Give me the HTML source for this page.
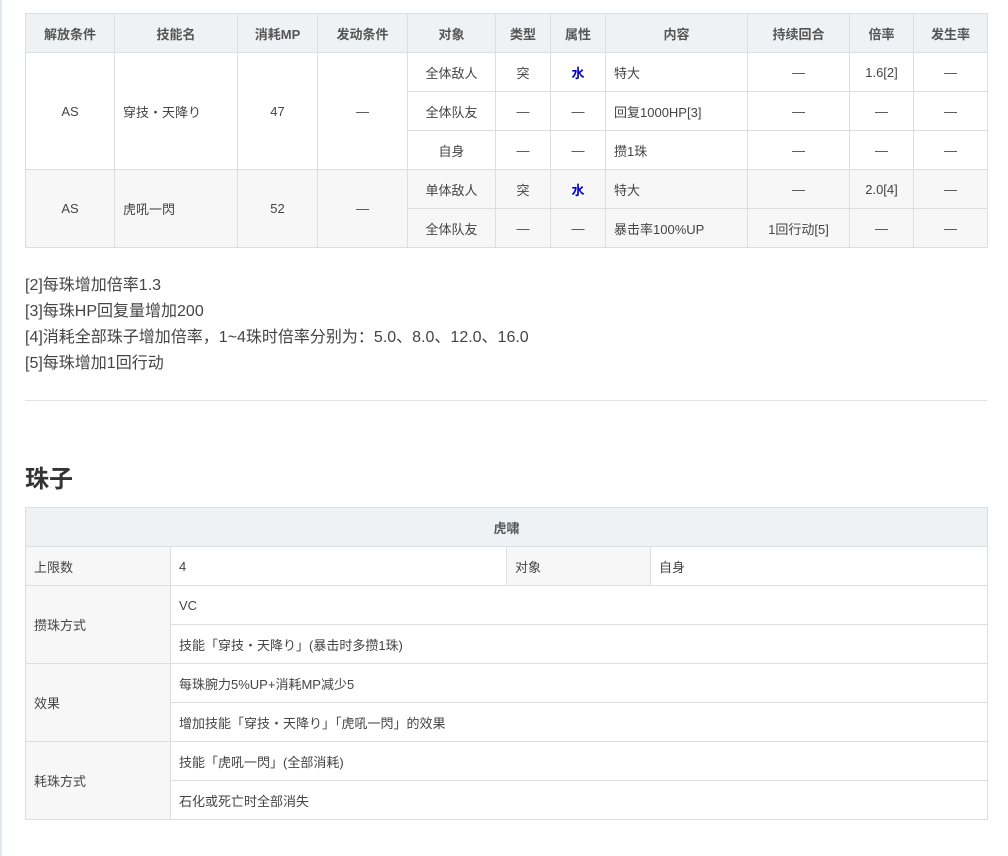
<!DOCTYPE html>
<html><head><meta charset="utf-8"><style>
body{margin:0;background:#fff;font-family:"Liberation Sans","Noto Sans CJK SC",sans-serif;color:#444;width:1008px;height:856px;overflow:hidden;position:relative}
.lb{position:absolute;left:0;top:0;width:2px;height:856px;background:#e3e9ef}
table{border-collapse:collapse;position:absolute;left:25px;width:962px;table-layout:fixed;font-size:13px}
td,th{border:1px solid #dcdfe2;height:39px;padding:0;box-sizing:border-box}
th{background:#eef2f5;font-weight:bold;color:#555}
.t1 td{text-align:center}
.t1 td.l{text-align:left;padding-left:8px}
.g td{background:#f7f7f7}
.w{color:#0000cc;font-weight:bold}
.notes{position:absolute;left:25px;top:273px;font-size:16px;line-height:26px;color:#444}
.hr{position:absolute;left:25px;width:962px;top:400px;height:1px;background:#e2e2e2}
h2{position:absolute;left:25px;top:459px;margin:0;font-size:24px;color:#333;font-weight:bold}
.t2 td{padding-left:8px}
.t2 td.k{background:#f7f7f7}
</style></head><body>
<div class="lb"></div>
<table class="t1" style="top:13px">
<colgroup><col style="width:89px"><col style="width:123px"><col style="width:80px"><col style="width:90px"><col style="width:88px"><col style="width:55px"><col style="width:55px"><col style="width:142px"><col style="width:102px"><col style="width:64px"><col style="width:74px"></colgroup>
<tr><th>解放条件</th><th>技能名</th><th>消耗MP</th><th>发动条件</th><th>对象</th><th>类型</th><th>属性</th><th>内容</th><th>持续回合</th><th>倍率</th><th>发生率</th></tr>
<tr><td rowspan="3">AS</td><td rowspan="3" class="l">穿技・天降り</td><td rowspan="3">47</td><td rowspan="3">—</td><td>全体敌人</td><td>突</td><td class="w">水</td><td class="l">特大</td><td>—</td><td>1.6[2]</td><td>—</td></tr>
<tr><td>全体队友</td><td>—</td><td>—</td><td class="l">回复1000HP[3]</td><td>—</td><td>—</td><td>—</td></tr>
<tr><td>自身</td><td>—</td><td>—</td><td class="l">攒1珠</td><td>—</td><td>—</td><td>—</td></tr>
<tr class="g"><td rowspan="2">AS</td><td rowspan="2" class="l">虎吼一閃</td><td rowspan="2">52</td><td rowspan="2">—</td><td>单体敌人</td><td>突</td><td class="w">水</td><td class="l">特大</td><td>—</td><td>2.0[4]</td><td>—</td></tr>
<tr class="g"><td>全体队友</td><td>—</td><td>—</td><td class="l">暴击率100%UP</td><td>1回行动[5]</td><td>—</td><td>—</td></tr>
</table>
<div class="notes">[2]每珠增加倍率1.3<br>[3]每珠HP回复量增加200<br>[4]消耗全部珠子增加倍率，1~4珠时倍率分别为：5.0、8.0、12.0、16.0<br>[5]每珠增加1回行动</div>
<div class="hr"></div>
<h2>珠子</h2>
<table class="t2" style="top:507px">
<colgroup><col style="width:145px"><col style="width:336px"><col style="width:144px"><col style="width:337px"></colgroup>
<tr><th colspan="4">虎啸</th></tr>
<tr><td class="k">上限数</td><td>4</td><td class="k">对象</td><td>自身</td></tr>
<tr><td class="k" rowspan="2">攒珠方式</td><td colspan="3">VC</td></tr>
<tr><td colspan="3">技能「穿技・天降り」(暴击时多攒1珠)</td></tr>
<tr><td class="k" rowspan="2">效果</td><td colspan="3">每珠腕力5%UP+消耗MP减少5</td></tr>
<tr><td colspan="3">增加技能「穿技・天降り」「虎吼一閃」的效果</td></tr>
<tr><td class="k" rowspan="2">耗珠方式</td><td colspan="3">技能「虎吼一閃」(全部消耗)</td></tr>
<tr><td colspan="3">石化或死亡时全部消失</td></tr>
</table>
</body></html>
